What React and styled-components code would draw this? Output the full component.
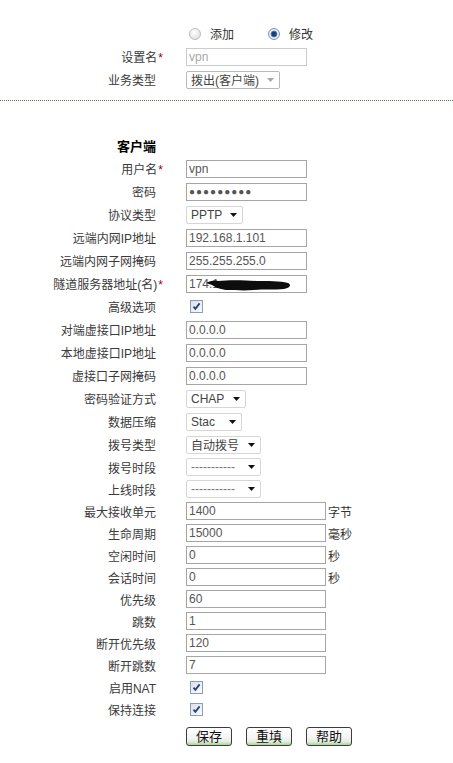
import React from 'react'
import styled, { createGlobalStyle } from 'styled-components'

const GlobalStyle = createGlobalStyle`
  body {
    margin: 0;
    background: #fff;
    font-family: "Liberation Sans", "Noto Sans CJK SC", sans-serif;
    font-size: 12px;
    color: #333;
  }
`

const Page = styled.div`
  padding-top: 22px;
  width: 453px;
`

const Row = styled.div`
  display: flex;
  align-items: center;
  height: ${p => (p.$tall ? 23 : 22)}px;
`

const Label = styled.div`
  width: 156px;
  flex-shrink: 0;
  text-align: right;
  white-space: nowrap;
  color: ${p => (p.$head ? '#000' : '#3a3a3a')};
  font-weight: ${p => (p.$head ? 'bold' : 'normal')};
  font-size: ${p => (p.$head ? 13 : 12)}px;
`

const Star = styled.span`
  color: #a30000;
  padding-left: 1px;
  margin-right: -7px;
`

const Cell = styled.div`
  margin-left: 30px;
  display: flex;
  align-items: center;
  position: relative;
`

const TextInput = styled.input`
  box-sizing: border-box;
  width: ${p => (p.$wide ? 140 : 121)}px;
  height: 18px;
  margin: 0;
  padding: 0 2px;
  border: 1px solid ${p => (p.disabled ? '#cbcbcb' : '#a5a5a5')};
  background: #fff;
  font-family: "Liberation Sans", "Noto Sans CJK SC", sans-serif;
  font-size: 12px;
  color: ${p => (p.disabled ? '#a8a8a8' : '#555')};
  outline: none;
`

const Secret = styled(TextInput).attrs({ as: 'div' })`
  display: flex;
  align-items: center;
`

const Dots = styled.span`
  letter-spacing: 1px;
  font-size: 10px;
  color: #555;
`

const Unit = styled.span`
  margin-left: 2px;
  color: #333;
`

const SelectBox = styled.div`
  box-sizing: border-box;
  width: ${p => p.$w}px;
  height: 18px;
  display: flex;
  align-items: center;
  justify-content: space-between;
  padding: 0 5px 0 4px;
  border: 1px solid ${p => (p.$disabled ? '#b9b9b9' : '#d6d6d6')};
  border-radius: 2px;
  background: #fff;
  color: ${p => (p.$muted ? '#777' : '#444')};
  white-space: nowrap;
`

const Check = styled.span`
  box-sizing: border-box;
  width: 13px;
  height: 13px;
  margin-left: 4px;
  border: 1px solid #8d9cb2;
  background: linear-gradient(135deg, #d9e0ea 0%, #eef1f6 60%, #fbfcfd 100%);
  display: flex;
  align-items: center;
  justify-content: center;
`

const RadioGroup = styled.div`
  display: flex;
  align-items: center;
  padding-left: 3px;
`

const Radio = styled.span`
  box-sizing: border-box;
  width: 12px;
  height: 12px;
  border-radius: 50%;
  border: 1px solid ${p => (p.$on ? '#7f93ad' : '#bdbdbd')};
  background: ${p =>
    p.$on
      ? 'radial-gradient(circle, #1d3f78 0 2.2px, #4f86c6 2.8px 3.4px, #e9eef5 3.6px)'
      : 'radial-gradient(circle at 40% 35%, #ffffff 0, #e4e4e4 70%, #d2d2d2 100%)'};
  margin-right: 9px;
`

const RadioText = styled.span`
  color: #333;
  margin-right: ${p => p.$gap || 0}px;
`

const Divider = styled.div`
  margin-top: 9px;
  border-top: 1px dotted #4d7d52;
`

const Section = styled.div`
  margin-top: 33px;
`

const Buttons = styled.div`
  display: flex;
  gap: 14px;
  margin: 7px 0 0 186px;
`

const Button = styled.button`
  box-sizing: border-box;
  width: 46px;
  height: 19px;
  padding: 0;
  border: 1px solid #3c3c3c;
  border-radius: 3px;
  background: linear-gradient(to bottom, #ffffff 0%, #f5f5f5 55%, #e3eedd 80%, #a9d596 100%);
  font-family: "Liberation Sans", "Noto Sans CJK SC", sans-serif;
  font-size: 13px;
  line-height: 16px;
  color: #111;
`

const Scribble = styled.svg`
  position: absolute;
  left: 20px;
  top: 2px;
  pointer-events: none;
`

function Arrow({ light }) {
  return (
    <svg width="7" height="4" viewBox="0 0 7 4">
      <path d="M0 0H7L3.5 4Z" fill={light ? '#a8a8a8' : '#111'} />
    </svg>
  )
}

function Tick() {
  return (
    <svg width="9" height="9" viewBox="0 0 9 9">
      <path d="M1.5 4.6L3.4 6.8L7.6 1.4" fill="none" stroke="#263d86" strokeWidth="1.8" />
    </svg>
  )
}

function Field({ label, star, head, tall, children }) {
  return (
    <Row $tall={tall}>
      <Label $head={head}>
        {label}
        {star && <Star>*</Star>}
      </Label>
      {children && <Cell>{children}</Cell>}
    </Row>
  )
}

function Select({ w, value, muted, disabled }) {
  return (
    <SelectBox $w={w} $muted={muted} $disabled={disabled}>
      <span>{value}</span>
      <Arrow light={disabled} />
    </SelectBox>
  )
}

function Input({ value, wide, unit }) {
  return (
    <>
      <TextInput readOnly value={value} $wide={wide} />
      {unit && <Unit>{unit}</Unit>}
    </>
  )
}

export default function App() {
  return (
    <Page>
      <GlobalStyle />
      <Field label="" tall>
        <RadioGroup>
          <Radio />
          <RadioText $gap={34}>添加</RadioText>
          <Radio $on />
          <RadioText>修改</RadioText>
        </RadioGroup>
      </Field>
      <Field label="设置名" star tall>
        <TextInput disabled value="vpn" />
      </Field>
      <Field label="业务类型" tall>
        <Select w={94} value="拨出(客户端)" disabled />
      </Field>
      <Divider />

      <Section>
        <Field label="客户端" head tall />
        <Field label="用户名" star tall><Input value="vpn" /></Field>
        <Field label="密码" tall>
          <Secret>
            <Dots>●●●●●●●●●</Dots>
          </Secret>
        </Field>
        <Field label="协议类型" tall><Select w={57} value="PPTP" /></Field>
        <Field label="远端内网IP地址" tall><Input value="192.168.1.101" /></Field>
        <Field label="远端内网子网掩码" tall><Input value="255.255.255.0" /></Field>
        <Field label="隧道服务器地址(名)" star tall>
          <Input value="174.1" />
          <Scribble width="86" height="14" viewBox="0 0 86 14">
            <path
              d="M0 6C4 4 8 3 12 4C22 3 36 3 50 4C62 4 74 4 82 6C86 8 84 11 78 12C68 13 58 12 48 13C38 14 28 13 20 13C13 12 9 10 6 8C4 7 2 7 0 6Z"
              fill="#0d0d0d"
            />
          </Scribble>
        </Field>
        <Field label="高级选项" tall><Check><Tick /></Check></Field>
        <Field label="对端虚接口IP地址" tall><Input value="0.0.0.0" /></Field>
        <Field label="本地虚接口IP地址" tall><Input value="0.0.0.0" /></Field>
        <Field label="虚接口子网掩码" tall><Input value="0.0.0.0" /></Field>
        <Field label="密码验证方式" tall><Select w={60} value="CHAP" /></Field>
        <Field label="数据压缩" tall><Select w={56} value="Stac" /></Field>
        <Field label="拨号类型" tall><Select w={75} value="自动拨号" /></Field>
        <Field label="拨号时段"><Select w={75} value="-----------" muted /></Field>
        <Field label="上线时段"><Select w={75} value="-----------" muted /></Field>
        <Field label="最大接收单元"><Input wide value="1400" unit="字节" /></Field>
        <Field label="生命周期"><Input wide value="15000" unit="毫秒" /></Field>
        <Field label="空闲时间"><Input wide value="0" unit="秒" /></Field>
        <Field label="会话时间"><Input wide value="0" unit="秒" /></Field>
        <Field label="优先级"><Input wide value="60" /></Field>
        <Field label="跳数"><Input wide value="1" /></Field>
        <Field label="断开优先级"><Input wide value="120" /></Field>
        <Field label="断开跳数"><Input wide value="7" /></Field>
        <Field label="启用NAT"><Check><Tick /></Check></Field>
        <Field label="保持连接"><Check><Tick /></Check></Field>
      </Section>

      <Buttons>
        <Button>保存</Button>
        <Button>重填</Button>
        <Button>帮助</Button>
      </Buttons>
    </Page>
  )
}
